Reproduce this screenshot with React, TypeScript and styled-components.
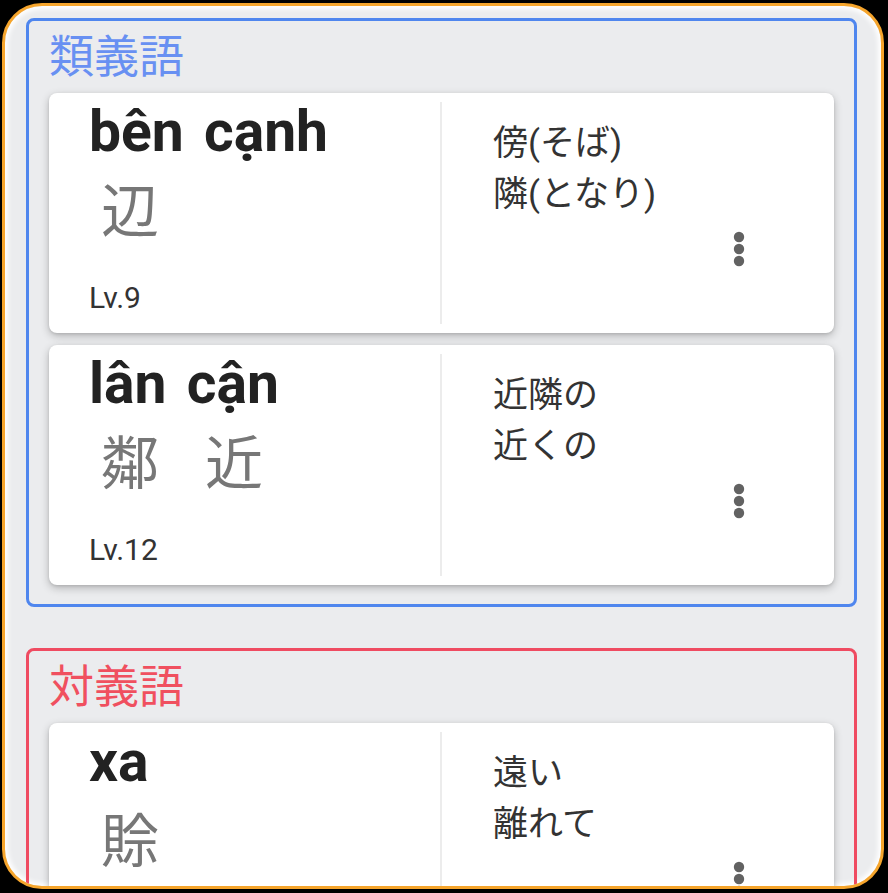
import React from "react";
import styled, { createGlobalStyle } from "styled-components";

const Global = createGlobalStyle`
  html, body { margin: 0; padding: 0; background: #000; }
  body { font-family: Roboto, "Noto Sans CJK JP", sans-serif; }
  * { box-sizing: border-box; }
`;

const Frame = styled.div`
  margin: 3px 4px 4px 2px;
  width: 882px;
  height: 886px;
  border: 3px solid #f6a52c;
  border-radius: 40px;
  background: #ebecee;
  box-shadow: inset 0 0 5px 3px #ffffff;
  overflow: hidden;
`;

const Scroll = styled.div`
  padding: 12px 24px 0 21px;
  display: flex;
  flex-direction: column;
  gap: 41px;
`;

const Section = styled.section<{ $color: string; $title: string }>`
  border: 3px solid ${(p) => p.$color};
  border-radius: 8px;
  padding: 6px 20px 19px 20px;
  h2 {
    margin: 0 0 13px 0;
    font-family: "Noto Sans CJK JP", sans-serif;
    font-weight: 400;
    font-size: 45px;
    line-height: 53px;
    color: ${(p) => p.$title};
  }
`;

const Cards = styled.div`
  display: flex;
  flex-direction: column;
  gap: 12px;
`;

const Card = styled.div`
  display: grid;
  grid-template-columns: 393px 1fr;
  height: 240px;
  background: #fff;
  border-radius: 8px;
  box-shadow: 0 3px 8px rgba(0, 0, 0, 0.24), 0 1px 3px rgba(0, 0, 0, 0.1);
`;

const Left = styled.div`
  display: flex;
  flex-direction: column;
  padding: 12px 0 9px 40px;
  margin: 9px 0;
  border-right: 2px solid #ececec;
`;

const Word = styled.div`
  font-family: Roboto, sans-serif;
  font-weight: 700;
  font-size: 57px;
  line-height: 56px;
  color: #222;
  word-spacing: 6px;
  margin-top: -10px;
`;

const KanjiRow = styled.div`
  display: flex;
  gap: 46px;
  padding-left: 12px;
  margin-top: 11px;
`;

const Kanji = styled.span`
  font-family: "Noto Sans CJK JP", sans-serif;
  font-size: 58px;
  line-height: 72px;
  color: #777;
`;

const Level = styled.div`
  margin-top: auto;
  font-family: Roboto, sans-serif;
  font-size: 30px;
  line-height: 34px;
  color: #333;
`;

const Right = styled.div`
  display: flex;
  padding: 25px 71px 0 51px;
`;

const Defs = styled.div`
  flex: 1;
  font-family: Roboto, "Noto Sans CJK JP", sans-serif;
  font-size: 35px;
  line-height: 51px;
  color: #333;
`;

const MenuButton = styled.button`
  align-self: flex-start;
  margin-top: 107px;
  width: 48px;
  height: 48px;
  padding: 0;
  border: none;
  background: transparent;
  display: flex;
  align-items: center;
  justify-content: center;
  color: #626262;
`;

type Entry = { word: string; kanji: string[]; level?: string; defs: string[] };

const MoreIcon = () => (
  <svg width="14" height="40" viewBox="0 0 14 40" fill="currentColor">
    <circle cx="7" cy="8" r="5.2" />
    <circle cx="7" cy="20" r="5.2" />
    <circle cx="7" cy="32" r="5.2" />
  </svg>
);

const WordCard = ({ e }: { e: Entry }) => (
  <Card>
    <Left>
      <Word>{e.word}</Word>
      <KanjiRow>
        {e.kanji.map((k, i) => (
          <Kanji key={i}>{k}</Kanji>
        ))}
      </KanjiRow>
      {e.level && <Level>{e.level}</Level>}
    </Left>
    <Right>
      <Defs>
        {e.defs.map((d, i) => (
          <div key={i}>{d}</div>
        ))}
      </Defs>
      <MenuButton aria-label="more">
        <MoreIcon />
      </MenuButton>
    </Right>
  </Card>
);

const synonyms: Entry[] = [
  { word: "bên cạnh", kanji: ["辺"], level: "Lv.9", defs: ["傍(そば)", "隣(となり)"] },
  { word: "lân cận", kanji: ["鄰", "近"], level: "Lv.12", defs: ["近隣の", "近くの"] },
];

const antonyms: Entry[] = [
  { word: "xa", kanji: ["賒"], defs: ["遠い", "離れて"] },
];

export default function App() {
  return (
    <>
      <Global />
      <Frame>
        <Scroll>
          <Section $color="#4f86ee" $title="#6890f2">
            <h2>類義語</h2>
            <Cards>
              {synonyms.map((e, i) => (
                <WordCard key={i} e={e} />
              ))}
            </Cards>
          </Section>
          <Section $color="#ef4b61" $title="#f0505f">
            <h2>対義語</h2>
            <Cards>
              {antonyms.map((e, i) => (
                <WordCard key={i} e={e} />
              ))}
            </Cards>
          </Section>
        </Scroll>
      </Frame>
    </>
  );
}
